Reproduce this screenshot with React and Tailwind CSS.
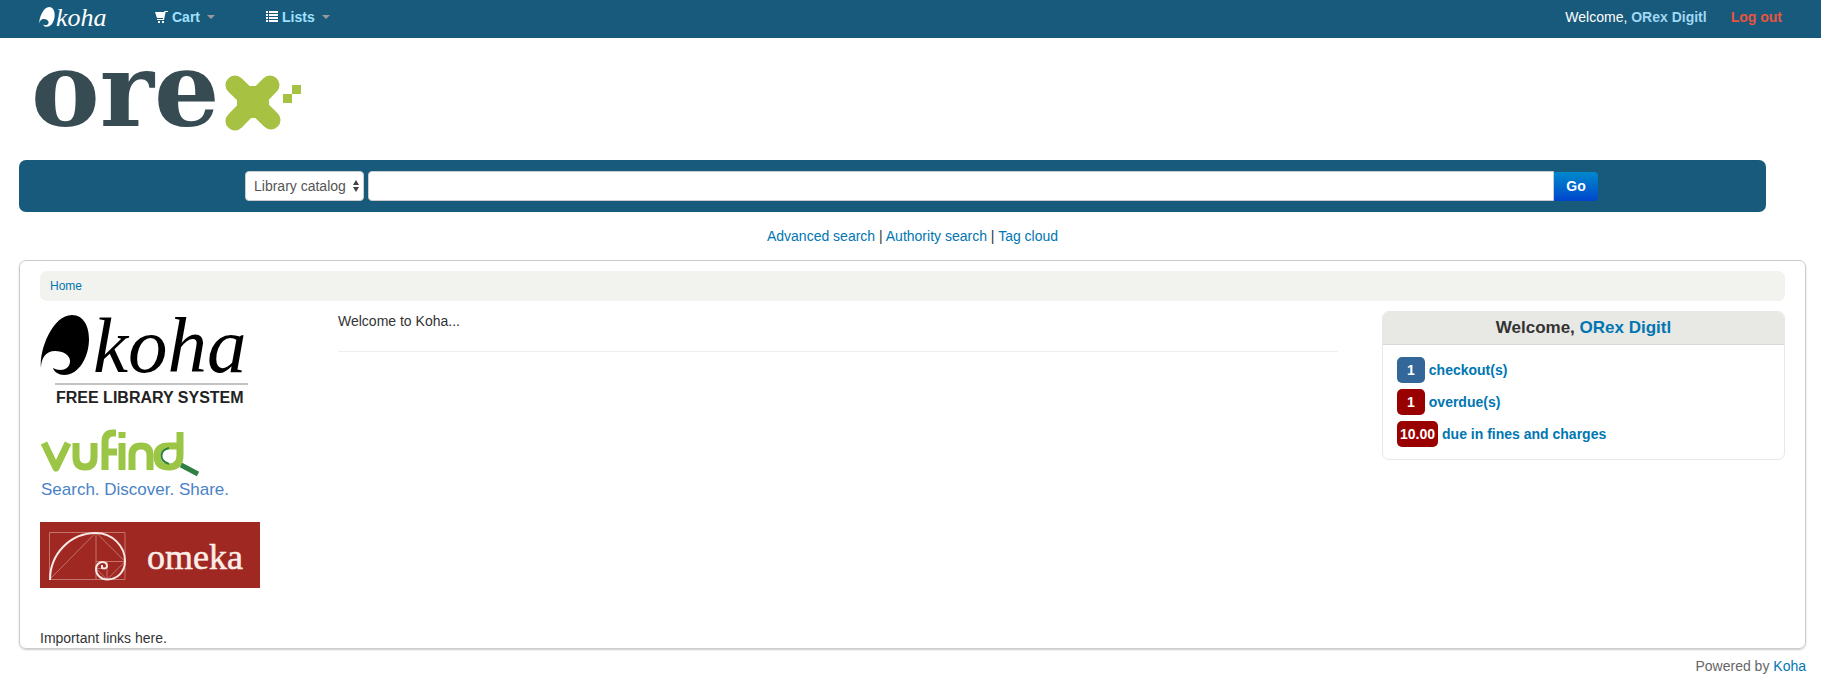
import React, { useState } from 'react';

const linkClass = 'text-[#0076b2] hover:underline';

// rounded shape with the hook cut out of its lower left
const KohaMark = () => (
    <path d="M1 53 C-1 34 13 0 32 0 C44 0 49 12 49 24 C49 42 39 60 24 60 C19 60 14 57 13 53 C20 57 30 55 30 46 C30 40 23 36 15 36 C6 36 1 43 1 53 Z" />
);

const KohaNavLogo = () => (
    <svg viewBox="0 0 68 34" className="block h-[34px] w-[68px] overflow-visible" fill="white" role="img" aria-label="koha">
        <g transform="translate(0 7) scale(0.32 0.33)"><KohaMark /></g>
        <text x="17" y="26" fontSize="26" fontStyle="italic" fontFamily="'Liberation Serif', serif">koha</text>
    </svg>
);

const OrexLogo = () => (
    <svg viewBox="0 0 270 70" className="block h-[70px] w-[270px] overflow-visible" role="img" aria-label="orex">
        <text x="-4" y="61" fontSize="103" fontWeight="bold" fill="#374b52" fontFamily="'DejaVu Serif', serif">ore</text>
        <g stroke="#a7c143" strokeWidth="19" strokeLinecap="round">
            <path d="M200 20 L236 55" />
            <path d="M235 20 L200 56" />
        </g>
        <path d="M214 21 H222 L234 34 V42 L222 53 H214 L202 42 V34 Z" fill="#a7c143" />
        <path d="M257 20 h9 v9 h-9 z M248 29 h9 v9 h-9 z" fill="#a7c143" />
    </svg>
);

const KohaLogo = () => (
    <svg viewBox="0 0 220 90" className="block h-[90px] w-[220px] overflow-visible" role="img" aria-label="Koha free library system">
        <g transform="translate(0 1)"><KohaMark /></g>
        <text x="53" y="58" fontSize="79" fontStyle="italic" fontFamily="'Liberation Serif', serif">koha</text>
        <path d="M15 70 H208" stroke="#888" />
        <text x="16" y="89" fontSize="16" fontWeight="bold" fill="#222" fontFamily="'Liberation Sans', sans-serif">FREE LIBRARY SYSTEM</text>
    </svg>
);

const VufindLogo = () => (
    <svg viewBox="0 0 220 72" className="block h-[72px] w-[220px]" role="img" aria-label="vufind">
        <g fill="none" stroke="#9bc544" strokeWidth="7">
            <path d="M4 15 L16 40 L28 15" strokeLinejoin="round" />
            <path d="M36 15 V29 Q36 39 45 39 Q54 39 54 29 V15" />
            <path d="M65 42 V14 Q65 5 73 5 H76" />
            <path d="M65 24 H77" />
            <path d="M82 15 V42" />
            <path d="M92 42 V27 Q92 18 101 18 Q110 18 110 27 V42" />
            <path d="M140 4 V27 Q140 39 129 39 Q117 39 117 28 Q117 18 129 18 H140" />
        </g>
        <path d="M82 4 V10" stroke="#9bc544" strokeWidth="7" />
        <path d="M129 20 C120 22 118 32 129 36" fill="none" stroke="#2f8043" strokeWidth="2" />
        <path d="M141 37 L158 46" stroke="#2f8043" strokeWidth="5" />
        <text x="1" y="67" fontSize="17" fill="#4a82c6" fontFamily="'Liberation Sans', sans-serif">Search. Discover. Share.</text>
    </svg>
);

const OmekaLogo = () => (
    <svg viewBox="0 0 220 66" className="block h-[66px] w-[220px] bg-[#a02822]" role="img" aria-label="omeka">
        <path d="M9.5 10.5 H85 V57.5 H9.5 Z M56 10.5 V57.5 M9.5 57.5 L56 10.5 L85 39.5 L67 57.5 M56 39.5 H85 M67 39.5 V57.5 M56 46.5 H67 M56 46.5 L67 57.5" fill="none" stroke="#c4746b" />
        <path d="M10 58 C10 32 30 11 56 11 C72 11 85 24 85 39 C85 50 77 57.5 67.5 57.5 C61 57.5 56 53 56 47 C56 43 59 40 62.5 40 C65.5 40 67 42 67 44 C67 46 65 47 62 46 V43" fill="none" stroke="#f8e9e4" strokeWidth="2" />
        <text x="107" y="47" fontSize="36" fill="#fbeee9" stroke="#fbeee9" strokeWidth="0.5" fontFamily="'Liberation Serif', serif">omeka</text>
    </svg>
);

const CartIcon = () => (
    <svg viewBox="0 0 13 13" className="h-[13px] w-[13px]" fill="white" aria-hidden="true">
        <path d="M0 1 H9 L9.6 0 H13 V1 H10.6 L9 9 H2 V8 H8 L8.2 7 H2 Z" />
        <path d="M3 10 h2 v2 h-2 z M7 10 h2 v2 h-2 z" />
    </svg>
);

const ListIcon = () => (
    <svg viewBox="0 0 12 12" className="h-3 w-3" fill="white" aria-hidden="true">
        <path d="M0 0h2v2H0z M3 0h9v2H3z M0 3h2v2H0z M3 3h9v2H3z M0 6h2v2H0z M3 6h9v2H3z M0 9h2v2H0z M3 9h9v2H3z" />
    </svg>
);

const NavMenu = ({ icon, label }) => (
    <button type="button" className="flex items-center gap-1 font-bold text-[#9fe1ff]">
        {icon}
        {label}
        <span className="ml-[3px] border-x-4 border-t-4 border-x-transparent border-t-[#999]" />
    </button>
);

const account = [
    { count: '1', label: 'checkout(s)', badge: 'bg-[#336699] px-[10px]' },
    { count: '1', label: 'overdue(s)', badge: 'bg-[#990000] px-[10px]' },
    { count: '10.00', label: 'due in fines and charges', badge: 'bg-[#990000] px-[3px]' },
];

const App = () => {
    const [query, setQuery] = useState('');

    return (
        <div className="font-['Liberation_Sans',Arial,sans-serif] text-sm leading-5 text-[#333]">
            <nav className="flex h-[38px] items-center bg-[#185a7b] px-[39px] pb-1">
                <a href="#home"><KohaNavLogo /></a>
                <div className="ml-12 flex gap-[51px]">
                    <NavMenu icon={<CartIcon />} label="Cart" />
                    <NavMenu icon={<ListIcon />} label="Lists" />
                </div>
                <div className="ml-auto flex gap-6">
                    <span className="text-white">Welcome, <a href="#account" className="font-bold text-[#9fd7f5]">ORex Digitl</a></span>
                    <a href="#logout" className="font-bold text-[#e8543f]">Log out</a>
                </div>
            </nav>

            <div className="pl-[19px] pr-[15px]">
                <a href="#orex" className="mt-[27px] ml-4 block w-fit"><OrexLogo /></a>

                <form
                    className="mt-[25px] mr-10 flex h-[52px] items-center rounded-[7px] bg-[#185a7b] pr-[168px] pl-[226px]"
                    onSubmit={(e) => e.preventDefault()}
                >
                    <div className="relative">
                        <select aria-label="Search in" className="block h-[30px] w-[119px] appearance-none rounded border border-[#ccc] bg-white pl-2 text-[#555]">
                            <option>Library catalog</option>
                        </select>
                        <svg viewBox="0 0 6 12" className="pointer-events-none absolute top-[9px] right-[5px] h-3 w-[6px]" fill="#444" aria-hidden="true">
                            <path d="M3 0 L6 5 H0 Z M3 12 L6 7 H0 Z" />
                        </svg>
                    </div>
                    <input
                        type="text"
                        aria-label="Search"
                        value={query}
                        onChange={(e) => setQuery(e.target.value)}
                        className="ml-1 h-[30px] min-w-0 flex-1 rounded-l border border-[#ccc] bg-white px-2"
                    />
                    <button type="submit" className="h-[29px] w-11 rounded-r bg-linear-to-b from-[#0088cc] to-[#0044cc] font-bold text-white">Go</button>
                </form>

                <div className="mt-[14px] text-center">
                    <a href="#advanced" className={linkClass}>Advanced search</a> | <a href="#authority" className={linkClass}>Authority search</a> | <a href="#tags" className={linkClass}>Tag cloud</a>
                </div>

                <main className="mt-[14px] rounded-[7px] border border-[#ccc] px-5 pt-[10px] shadow-[0_1px_2px_#ccc]">
                    <div className="h-[30px] rounded-[7px] bg-[#f2f2ee] px-[10px] text-xs leading-[30px]">
                        <a href="#home" className={linkClass}>Home</a>
                    </div>

                    <div className="mt-[10px] grid grid-cols-[254fr_1000fr_403fr] items-start gap-11">
                        <div className="pt-[3px]">
                            <a href="#koha" className="block"><KohaLogo /></a>
                            <a href="#vufind" className="mt-6 block"><VufindLogo /></a>
                            <a href="#omeka" className="mt-[22px] block"><OmekaLogo /></a>
                        </div>
                        <div className="border-b border-[#eee] pb-5">Welcome to Koha...</div>
                        <section className="rounded-[7px] border border-[#e8e8e8]">
                            <h2 className="h-[33px] rounded-t-[6px] border-b border-[#d8d8d8] bg-[#e8e8e5] text-center text-[17px] leading-8 font-bold">
                                Welcome, <a href="#account" className={linkClass}>ORex Digitl</a>
                            </h2>
                            <ul className="flex flex-col gap-[6px] px-[14px] py-3 font-bold">
                                {account.map((item) => (
                                    <li key={item.label}>
                                        <a href="#account" className="flex items-center gap-1 text-[#0076b2]">
                                            <span className={`rounded-[5px] leading-[26px] text-white ${item.badge}`}>{item.count}</span>
                                            {item.label}
                                        </a>
                                    </li>
                                ))}
                            </ul>
                        </section>
                    </div>

                    <p className="mt-10">Important links here.</p>
                </main>

                <footer className="mt-[7px] pb-[7px] text-right text-[#666]">
                    Powered by <a href="#koha" className={linkClass}>Koha</a>
                </footer>
            </div>
        </div>
    );
};

export default App;
